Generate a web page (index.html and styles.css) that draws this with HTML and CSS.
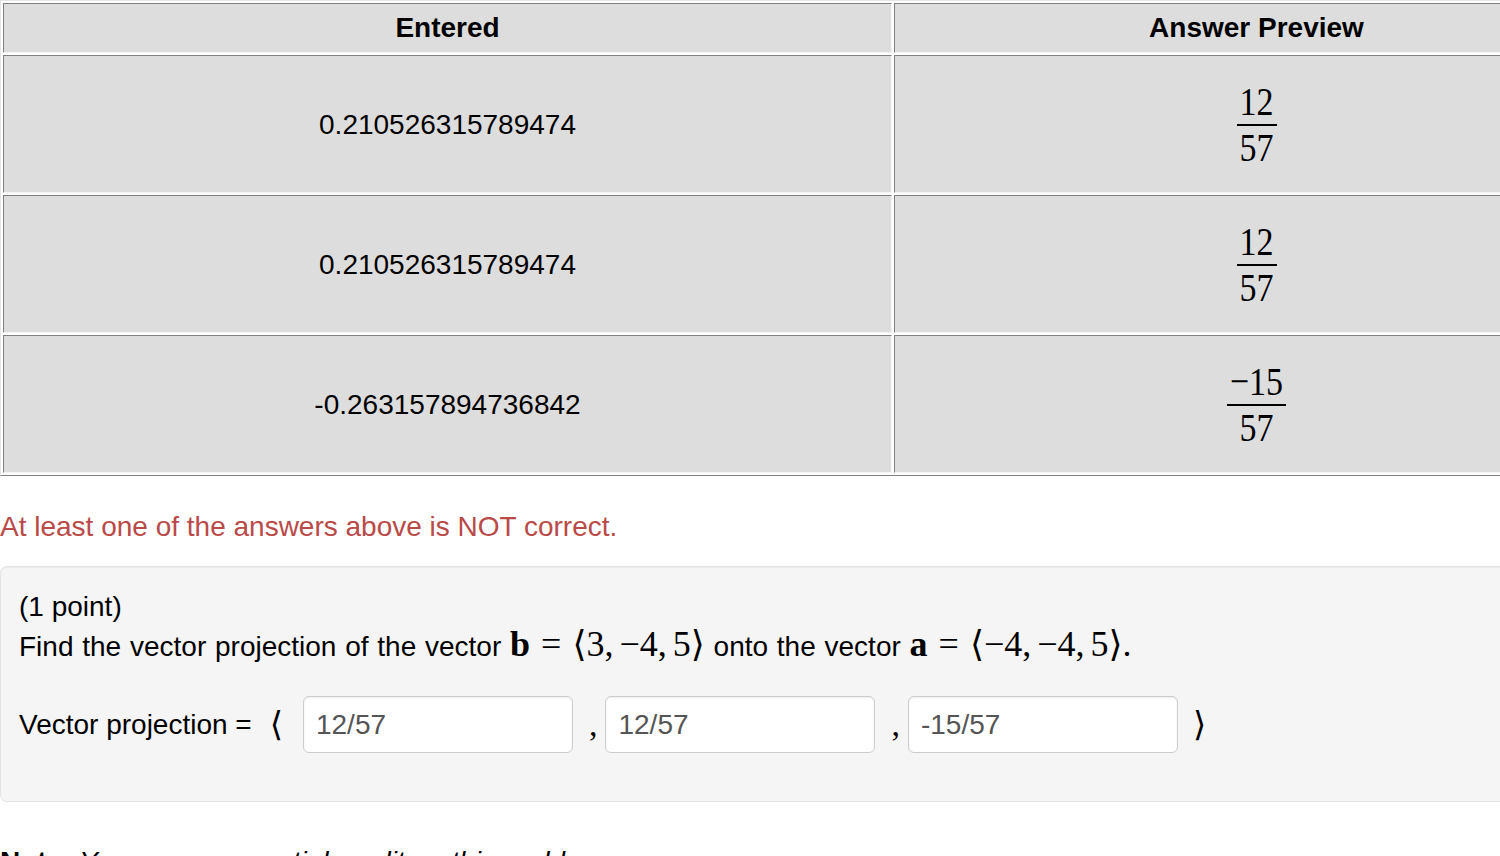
FILE: index.html
```html
<!DOCTYPE html>
<html>
<head>
<meta charset="utf-8">
<link rel="stylesheet" href="styles.css">
</head>
<body>
<div class="page">
  <table class="results">
    <tr>
      <th class="col-entered">Entered</th>
      <th class="col-preview">Answer Preview</th>
    </tr>
    <tr>
      <td>0.210526315789474</td>
      <td><span class="frac"><span class="num">12</span><span class="bar"></span><span class="den">57</span></span></td>
    </tr>
    <tr>
      <td>0.210526315789474</td>
      <td><span class="frac"><span class="num">12</span><span class="bar"></span><span class="den">57</span></span></td>
    </tr>
    <tr>
      <td>-0.263157894736842</td>
      <td><span class="frac"><span class="num">−15</span><span class="bar"></span><span class="den">57</span></span></td>
    </tr>
  </table>

  <p class="msg">At least one of the answers above is NOT correct.</p>

  <div class="problem">
    <p class="line">(1 point)</p>
    <p class="line statement">Find the vector projection of the vector <span class="m"><b>b</b><span class="mo">=</span>⟨3,<span class="th"></span>−4,<span class="th"></span>5⟩</span> onto the vector <span class="m"><b>a</b><span class="mo">=</span>⟨−4,<span class="th"></span>−4,<span class="th"></span>5⟩.</span></p>
    <div class="answer">
      <span class="label">Vector projection =</span>
      <span class="m lang">⟨</span>
      <input class="ans" type="text" value="12/57">
      <span class="m comma">,</span>
      <input class="ans" type="text" value="12/57">
      <span class="m comma">,</span>
      <input class="ans" type="text" value="-15/57">
      <span class="m rang">⟩</span>
    </div>
  </div>

  <p class="note"><b>Note:</b> <i>You can earn partial credit on this problem.</i></p>
</div>
</body>
</html>
```

FILE: styles.css
```css
html, body {
  margin: 0;
  padding: 0;
  background: #fff;
  overflow: hidden;
}

body {
  font-family: "Liberation Sans", Arial, sans-serif;
  font-size: 28px;
  line-height: 40px;
  color: #000;
}

.page {
  width: 1622px;
}

.results {
  border-collapse: separate;
  border-spacing: 2px;
  border: 1px solid;
  border-color: #e6e6e6 #808080 #808080 #e6e6e6;
  width: 1622px;
  table-layout: fixed;
}

.results th,
.results td {
  box-sizing: border-box;
  background: #dddddd;
  border: 1px solid;
  border-color: #808080 #f4f4f4 #f4f4f4 #808080;
  text-align: center;
  vertical-align: middle;
  padding: 0;
}

.results td {
  height: 138px;
  padding-top: 2px;
}

.results th {
  height: 50px;
  font-weight: bold;
}

.col-entered {
  width: 889px;
}

.frac {
  display: inline-flex;
  flex-direction: column;
  vertical-align: middle;
  font-family: "Liberation Serif", "Times New Roman", serif;
  font-size: 34px;
  line-height: 34px;
}

.num,
.den {
  display: block;
  text-align: center;
  padding: 0 3px;
  transform: scaleY(1.2);
}

.bar {
  height: 2px;
  background: #000;
  margin: 5px 0;
}

.msg {
  margin: 31px 0 19px 0;
  color: #b94a48;
}

.problem {
  background: #f5f5f5;
  border: 1px solid #e3e3e3;
  border-radius: 7px;
  box-shadow: inset 0 1px 1px rgba(0, 0, 0, 0.05);
  padding: 20px 18px 48px 18px;
}

.line {
  margin: 0;
}

.statement {
  word-spacing: 1px;
}

.m {
  font-family: "Liberation Serif", "DejaVu Serif", "Times New Roman", serif;
  font-size: 36px;
  line-height: 28px;
  word-spacing: 0;
}

.m b {
  font-weight: bold;
}

.mo {
  margin: 0 11px;
}

.th {
  display: inline-block;
  width: 6px;
}

.answer {
  display: flex;
  align-items: center;
  margin-top: 29px;
}

.answer .m {
  font-size: 34px;
}

.label {
  white-space: pre;
}

.lang {
  margin: 0 20px 0 18px;
}

.ans {
  box-sizing: border-box;
  width: 270px;
  height: 57px;
  border: 1px solid #cccccc;
  border-radius: 6px;
  box-shadow: inset 0 1px 2px rgba(0, 0, 0, 0.075);
  background: #fff;
  padding: 0 12px;
  font-family: "Liberation Sans", Arial, sans-serif;
  font-size: 28px;
  color: #555;
  margin: 0;
  outline: none;
}

.comma {
  margin: 0 8px 0 16px;
}

.rang {
  margin-left: 15px;
}

.note {
  margin: 40px 0 0 0;
}
```
